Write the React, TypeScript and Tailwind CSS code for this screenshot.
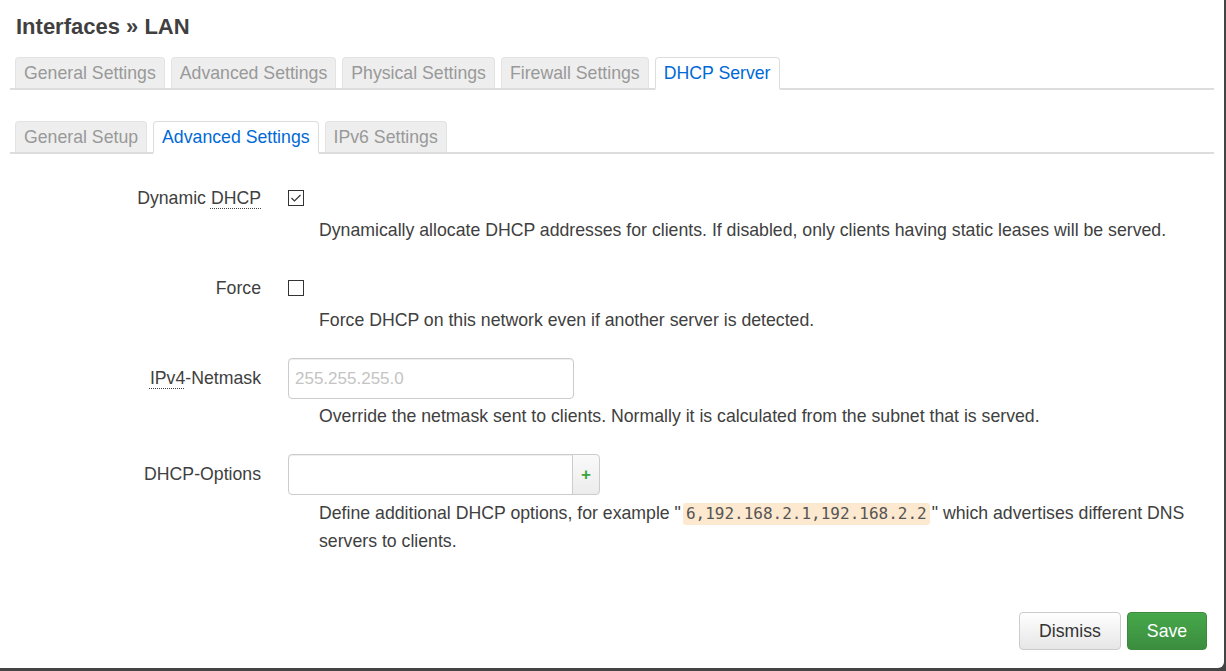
import type { ReactNode } from "react";

const font = { fontFamily: '"Liberation Sans", Arial, sans-serif' };

function Tabs({ items, active }: { items: string[]; active: number }) {
  return (
    <div className="flex gap-[6px] pl-[5px] border-b-2 border-[#ddd]">
      {items.map((t, i) => (
        <div
          key={t}
          className={
            i === active
              ? "h-[33px] -mb-[2px] px-[8px] flex items-center rounded-t-[4px] border border-b-2 border-[#ddd] border-b-white bg-white text-[#0069d6]"
              : "h-[31px] px-[8px] flex items-center rounded-t-[4px] border border-b-0 border-[#e3e3e3] bg-[#eee] text-[#999]"
          }
        >
          {t}
        </div>
      ))}
    </div>
  );
}

function Abbr({ children }: { children: ReactNode }) {
  return (
    <span className="underline decoration-dotted decoration-1 underline-offset-[4px]">
      {children}
    </span>
  );
}

function Section({
  label,
  control,
  controlH,
  desc,
  descMt,
  mt,
}: {
  label: ReactNode;
  control: ReactNode;
  controlH: number;
  desc: ReactNode;
  descMt: string;
  mt: string;
}) {
  return (
    <div className={`flex ${mt}`}>
      <div
        className="w-[251px] flex items-center justify-end shrink-0"
        style={{ height: controlH }}
      >
        {label}
      </div>
      <div className="ml-[27px] flex-1">
        <div className="flex items-center" style={{ height: controlH }}>
          {control}
        </div>
        <div className={`pl-[31px] leading-[28px] ${descMt}`}>{desc}</div>
      </div>
    </div>
  );
}

function Checkbox({ checked }: { checked?: boolean }) {
  return (
    <div className="w-[16px] h-[16px] border border-[#333] bg-white flex items-center justify-center">
      {checked && (
        <svg width="12" height="12" viewBox="0 0 12 12" fill="none" stroke="#333" strokeWidth="1.2">
          <polyline points="1.5,6 4.5,9 10.5,3" />
        </svg>
      )}
    </div>
  );
}

export default function App() {
  return (
    <div className="w-[1226px] h-[671px] bg-[#444] overflow-hidden" style={font}>
      <div className="w-[1224px] h-[668px] bg-white rounded-br-[6px] px-[10px] text-[17.7px] text-[#404040]">
        <h2 className="pt-[14px] pl-[6px] text-[22px] leading-[26px] font-bold text-[#404040]">
          Interfaces » LAN
        </h2>

        <div className="mt-[17px]">
          <Tabs
            items={[
              "General Settings",
              "Advanced Settings",
              "Physical Settings",
              "Firewall Settings",
              "DHCP Server",
            ]}
            active={4}
          />
        </div>

        <div className="mt-[31px]">
          <Tabs items={["General Setup", "Advanced Settings", "IPv6 Settings"]} active={1} />
        </div>

        <Section
          mt="mt-[26px]"
          controlH={36}
          label={
            <span>
              Dynamic <Abbr>DHCP</Abbr>
            </span>
          }
          control={<Checkbox checked />}
          descMt="mt-0"
          desc="Dynamically allocate DHCP addresses for clients. If disabled, only clients having static leases will be served."
        />

        <Section
          mt="mt-[26px]"
          controlH={36}
          label={<span>Force</span>}
          control={<Checkbox />}
          descMt="mt-0"
          desc="Force DHCP on this network even if another server is detected."
        />

        <Section
          mt="mt-[24px]"
          controlH={41}
          label={
            <span>
              <Abbr>IPv4</Abbr>-Netmask
            </span>
          }
          control={
            <input
              placeholder="255.255.255.0"
              className="w-[286px] h-[41px] px-[6px] rounded-[4px] border border-[#ccc] shadow-[inset_0_1px_1px_rgba(0,0,0,0.075)] text-[17px] placeholder:text-[#c4c4c4] outline-none"
              style={font}
            />
          }
          descMt="mt-[3px]"
          desc="Override the netmask sent to clients. Normally it is calculated from the subnet that is served."
        />

        <Section
          mt="mt-[24px]"
          controlH={41}
          label={<span>DHCP-Options</span>}
          control={
            <div className="flex h-[41px]">
              <input
                className="w-[285px] h-[41px] px-[6px] rounded-l-[4px] border border-[#ccc] shadow-[inset_0_1px_1px_rgba(0,0,0,0.075)] outline-none"
                style={font}
              />
              <div className="w-[28px] h-[41px] -ml-px flex items-center justify-center rounded-r-[4px] border border-[#ccc] bg-gradient-to-b from-[#fafafa] to-[#ececec] text-[#3aa53a] font-bold text-[17px]">
                +
              </div>
            </div>
          }
          descMt="mt-[4px]"
          desc={
            <>
              Define additional DHCP options, for example "
              <code
                className="inline-block bg-[#fde9cf] text-[#555] rounded-[3px] px-[3px] mx-[2px] text-[16px] leading-[22px]"
                style={{ fontFamily: '"DejaVu Sans Mono", monospace' }}
              >
                6,192.168.2.1,192.168.2.2
              </code>
              " which advertises different DNS servers to clients.
            </>
          }
        />

        <div className="mt-[57px] flex justify-end gap-[6px] pr-[7px]">
          <button
            className="w-[102px] h-[38px] rounded-[4px] border border-[#ccc] bg-gradient-to-b from-white to-[#e6e6e6] text-[#333] text-[17.7px]"
            style={font}
          >
            Dismiss
          </button>
          <button
            className="w-[80px] h-[38px] rounded-[4px] border border-[#3b8a3e] bg-gradient-to-b from-[#46a84a] to-[#3b8d3f] text-white text-[17.7px]"
            style={font}
          >
            Save
          </button>
        </div>
      </div>
    </div>
  );
}
